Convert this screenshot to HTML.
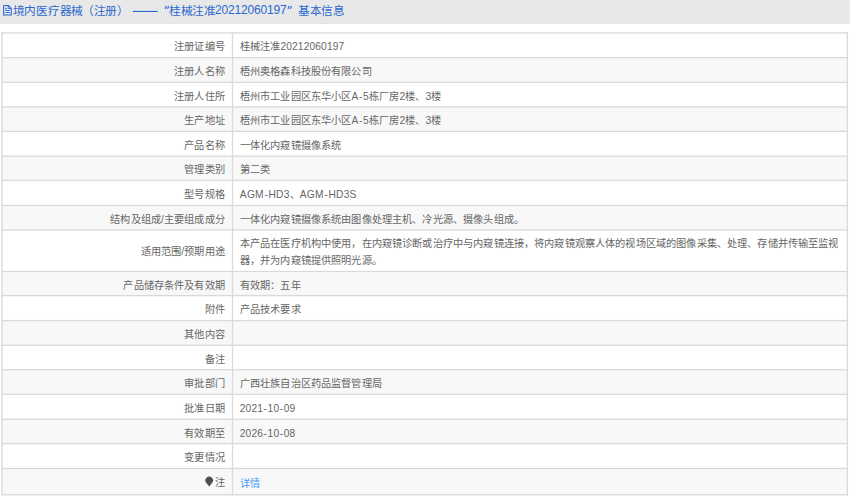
<!DOCTYPE html>
<html lang="zh-CN"><head><meta charset="utf-8"><style>
html,body{margin:0;padding:0;background:#fff;width:850px;height:497px;overflow:hidden;position:relative}
body{font-family:"Liberation Sans",sans-serif;}
.hdr{position:absolute;left:0;top:0;width:850px;height:22.5px;background:#e8e8e8;border-bottom:1px solid #e3e3e8}
.title{position:absolute;left:0;top:0;height:23px;line-height:21px;font-size:11.7px;color:#2868d0;white-space:nowrap}
.title span{position:absolute;top:0;letter-spacing:-0.3px}
.bg{position:absolute;left:2.0px;width:845.40px}
.hl{position:absolute;left:2.0px;width:846.40px;height:1px;background:#dedede}
.grid{position:absolute;left:0;top:0}
.lab{position:absolute;left:3.0px;width:221.95px;text-align:right;font-size:10.2px;letter-spacing:0.15px;color:#666;white-space:nowrap;padding-top:1.8px}
.val{position:absolute;left:239.80px;font-size:10.2px;letter-spacing:0.15px;color:#666;white-space:nowrap;padding-top:1.8px}
.lnk{color:#4a9af5}
.d{margin:0 0.5px}
.l{letter-spacing:0.3px}
.pin{vertical-align:-1px;margin-right:1px}
</style></head><body>
<div class="hdr"></div>
<div class="title">
<svg style="position:absolute;left:0;top:0" width="20" height="20"><path d="M3.65 5.45H8.3L11.25 8.4V14.95H3.65Z" fill="none" stroke="#2868d0" stroke-width="1.1" stroke-linejoin="round"/><path d="M8.2 5.5V8.5H11.2" fill="none" stroke="#2868d0" stroke-width="0.9"/><path d="M5.2 8.45H7M5.2 10.45H9.9M5.2 12.5H9.9" stroke="#2868d0" stroke-width="0.9"/></svg>
<span style="left:12.8px">境内医疗器械</span>
<span style="left:82px">（注册）</span>
<svg style="position:absolute;left:0;top:0" width="300" height="20"><rect x="132.9" y="10.9" width="24.8" height="1.1" fill="#2868d0"/></svg>
<svg style="position:absolute;left:0;top:0" width="300" height="20"><path d="M166.3 5.9L165.3 8.9M168.6 5.9L167.6 8.9" stroke="#2868d0" stroke-width="1.2"/></svg>
<span style="left:169px">桂械注准</span>
<span style="left:215px;font-size:12px;letter-spacing:-0.17px;top:0">20212060197</span>
<svg style="position:absolute;left:0;top:0" width="300" height="20"><path d="M289.1 5.9L288.1 8.9M291.4 5.9L290.4 8.9" stroke="#2868d0" stroke-width="1.2"/></svg>
<span style="left:298px">基本信息</span>
</div>
<div class="bg" style="top:32.94px;height:24.64px;background:#fff"></div>
<div class="bg" style="top:57.58px;height:24.77px;background:#f8f8f8"></div>
<div class="bg" style="top:82.35px;height:24.49px;background:#fff"></div>
<div class="bg" style="top:106.84px;height:24.51px;background:#f8f8f8"></div>
<div class="bg" style="top:131.35px;height:24.81px;background:#fff"></div>
<div class="bg" style="top:156.16px;height:24.26px;background:#f8f8f8"></div>
<div class="bg" style="top:180.42px;height:25.08px;background:#fff"></div>
<div class="bg" style="top:205.50px;height:24.50px;background:#f8f8f8"></div>
<div class="bg" style="top:230.00px;height:41.50px;background:#fff"></div>
<div class="bg" style="top:271.50px;height:24.08px;background:#f8f8f8"></div>
<div class="bg" style="top:295.58px;height:25.00px;background:#fff"></div>
<div class="bg" style="top:320.58px;height:24.68px;background:#f8f8f8"></div>
<div class="bg" style="top:345.26px;height:24.48px;background:#fff"></div>
<div class="bg" style="top:369.74px;height:24.61px;background:#f8f8f8"></div>
<div class="bg" style="top:394.35px;height:24.95px;background:#fff"></div>
<div class="bg" style="top:419.30px;height:24.30px;background:#f8f8f8"></div>
<div class="bg" style="top:443.60px;height:24.90px;background:#fff"></div>
<div class="bg" style="top:468.50px;height:26.30px;background:#f8f8f8"></div>
<svg class="grid" width="850" height="497" viewBox="0 0 850 497"><rect x="1.35" y="32.29" width="846.70" height="1.3" fill="#d9d9d9"/><rect x="1.35" y="56.93" width="846.70" height="1.3" fill="#d9d9d9"/><rect x="1.35" y="81.70" width="846.70" height="1.3" fill="#d9d9d9"/><rect x="1.35" y="106.19" width="846.70" height="1.3" fill="#d9d9d9"/><rect x="1.35" y="130.70" width="846.70" height="1.3" fill="#d9d9d9"/><rect x="1.35" y="155.51" width="846.70" height="1.3" fill="#d9d9d9"/><rect x="1.35" y="179.77" width="846.70" height="1.3" fill="#d9d9d9"/><rect x="1.35" y="204.85" width="846.70" height="1.3" fill="#d9d9d9"/><rect x="1.35" y="229.35" width="846.70" height="1.3" fill="#d9d9d9"/><rect x="1.35" y="270.85" width="846.70" height="1.3" fill="#d9d9d9"/><rect x="1.35" y="294.93" width="846.70" height="1.3" fill="#d9d9d9"/><rect x="1.35" y="319.93" width="846.70" height="1.3" fill="#d9d9d9"/><rect x="1.35" y="344.61" width="846.70" height="1.3" fill="#d9d9d9"/><rect x="1.35" y="369.09" width="846.70" height="1.3" fill="#d9d9d9"/><rect x="1.35" y="393.70" width="846.70" height="1.3" fill="#d9d9d9"/><rect x="1.35" y="418.65" width="846.70" height="1.3" fill="#d9d9d9"/><rect x="1.35" y="442.95" width="846.70" height="1.3" fill="#d9d9d9"/><rect x="1.35" y="467.85" width="846.70" height="1.3" fill="#d9d9d9"/><rect x="1.35" y="494.15" width="846.70" height="1.3" fill="#d9d9d9"/><rect x="1.35" y="32.29" width="1.3" height="463.16" fill="#d9d9d9"/><rect x="231.85" y="32.29" width="1.3" height="463.16" fill="#d9d9d9"/><rect x="846.75" y="32.29" width="1.3" height="463.16" fill="#d9d9d9"/></svg>
<svg style="position:absolute;left:0;top:0" width="850" height="497"><path d="M209.2 486.6L206.6 483.2A3.75 3.75 0 1 1 211.8 483.2Z" fill="#4c4c4c"/><circle cx="209.2" cy="480.6" r="2.6" fill="none" stroke="#5a5a5a" stroke-width="0.8"/></svg>
<div class="lab" style="top:33.44px;height:23.64px;line-height:23.64px">注册证编号</div>
<div class="val" style="top:33.44px;height:23.64px;line-height:23.64px">桂械注准20212060197</div>
<div class="lab" style="top:58.08px;height:23.77px;line-height:23.77px">注册人名称</div>
<div class="val" style="top:58.08px;height:23.77px;line-height:23.77px">梧州奥格森科技股份有限公司</div>
<div class="lab" style="top:82.85px;height:23.49px;line-height:23.49px">注册人住所</div>
<div class="val" style="top:82.85px;height:23.49px;line-height:23.49px">梧州市工业园区东华小区<span class="l">A</span><span class="d">-</span>5栋厂房2楼、3楼</div>
<div class="lab" style="top:107.34px;height:23.51px;line-height:23.51px">生产地址</div>
<div class="val" style="top:107.34px;height:23.51px;line-height:23.51px">梧州市工业园区东华小区<span class="l">A</span><span class="d">-</span>5栋厂房2楼、3楼</div>
<div class="lab" style="top:131.85px;height:23.81px;line-height:23.81px">产品名称</div>
<div class="val" style="top:131.85px;height:23.81px;line-height:23.81px">一体化内窥镜摄像系统</div>
<div class="lab" style="top:156.66px;height:23.26px;line-height:23.26px">管理类别</div>
<div class="val" style="top:156.66px;height:23.26px;line-height:23.26px">第二类</div>
<div class="lab" style="top:180.92px;height:24.08px;line-height:24.08px">型号规格</div>
<div class="val" style="top:180.92px;height:24.08px;line-height:24.08px"><span class="l">AGM</span><span class="d">-</span><span class="l">HD</span>3、<span class="l">AGM</span><span class="d">-</span><span class="l">HD</span>3<span class="l">S</span></div>
<div class="lab" style="top:206.00px;height:23.50px;line-height:23.50px">结构及组成/主要组成成分</div>
<div class="val" style="top:206.00px;height:23.50px;line-height:23.50px">一体化内窥镜摄像系统由图像处理主机、冷光源、摄像头组成。</div>
<div class="lab" style="top:230.50px;height:40.50px;line-height:40.50px">适用范围/预期用途</div>
<div class="val" style="top:234.15px;line-height:16.6px">本产品在医疗机构中使用，在内窥镜诊断或治疗中与内窥镜连接，将内窥镜观察人体的视场区域的图像采集、处理、存储并传输至监视<br>器，并为内窥镜提供照明光源。</div>
<div class="lab" style="top:272.00px;height:23.08px;line-height:23.08px">产品储存条件及有效期</div>
<div class="val" style="top:272.00px;height:23.08px;line-height:23.08px">有效期：五年</div>
<div class="lab" style="top:296.08px;height:24.00px;line-height:24.00px">附件</div>
<div class="val" style="top:296.08px;height:24.00px;line-height:24.00px">产品技术要求</div>
<div class="lab" style="top:321.08px;height:23.68px;line-height:23.68px">其他内容</div>
<div class="val" style="top:321.08px;height:23.68px;line-height:23.68px"></div>
<div class="lab" style="top:345.76px;height:23.48px;line-height:23.48px">备注</div>
<div class="val" style="top:345.76px;height:23.48px;line-height:23.48px"></div>
<div class="lab" style="top:370.24px;height:23.61px;line-height:23.61px">审批部门</div>
<div class="val" style="top:370.24px;height:23.61px;line-height:23.61px">广西壮族自治区药品监督管理局</div>
<div class="lab" style="top:394.85px;height:23.95px;line-height:23.95px">批准日期</div>
<div class="val" style="top:394.85px;height:23.95px;line-height:23.95px">2021<span class="d">-</span>10<span class="d">-</span>09</div>
<div class="lab" style="top:419.80px;height:23.30px;line-height:23.30px">有效期至</div>
<div class="val" style="top:419.80px;height:23.30px;line-height:23.30px">2026<span class="d">-</span>10<span class="d">-</span>08</div>
<div class="lab" style="top:444.10px;height:23.90px;line-height:23.90px">变更情况</div>
<div class="val" style="top:444.10px;height:23.90px;line-height:23.90px"></div>
<div class="lab" style="top:469.00px;height:25.30px;line-height:25.30px"><span style="position:relative;top:-1px">注</span></div>
<div class="val" style="top:469.00px;height:25.30px;line-height:25.30px"><span class="lnk">详情</span></div>
</body></html>
